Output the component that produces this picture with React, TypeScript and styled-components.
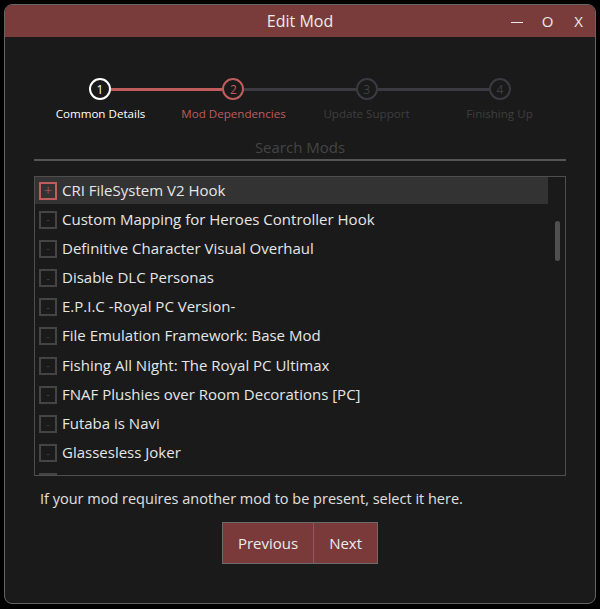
import { type FC } from 'react'
import { styled, createGlobalStyle } from 'styled-components'

const GlobalStyle = createGlobalStyle`
  html, body {
    margin: 0;
    padding: 0;
    background: #000;
  }
  body {
    font-family: "Open Sans", "Noto Sans", sans-serif;
  }
`

const mods = [
  'CRI FileSystem V2 Hook',
  'Custom Mapping for Heroes Controller Hook',
  'Definitive Character Visual Overhaul',
  'Disable DLC Personas',
  'E.P.I.C -Royal PC Version-',
  'File Emulation Framework: Base Mod',
  'Fishing All Night: The Royal PC Ultimax',
  'FNAF Plushies over Room Decorations [PC]',
  'Futaba is Navi',
  'Glassesless Joker',
  'Goho-M Glasses'
]

const steps = ['Common Details', 'Mod Dependencies', 'Update Support', 'Finishing Up']

type StepState = 'done' | 'active' | 'todo'

const stateOf = (i: number): StepState => (i === 0 ? 'done' : i === 1 ? 'active' : 'todo')

const App: FC = () => {
  return (
    <>
      <GlobalStyle />
      <Window>
        <TitleBar>
          <span />
          <Title>Edit Mod</Title>
          <Controls>
            <ControlButton><MinimizeBar /></ControlButton>
            <ControlButton>O</ControlButton>
            <ControlButton>X</ControlButton>
          </Controls>
        </TitleBar>
        <Body>
          <Track>
            <HalfSpacer />
            {steps.map((s, i) => (
              <StepGroup key={s} $last={i === steps.length - 1}>
                <Circle $state={stateOf(i)}>{i + 1}</Circle>
                {i < steps.length - 1 && <Line $on={i === 0} />}
              </StepGroup>
            ))}
            <HalfSpacer />
          </Track>
          <Labels>
            {steps.map((s, i) => (
              <Label key={s} $state={stateOf(i)}>{s}</Label>
            ))}
          </Labels>
          <Search placeholder="Search Mods" />
          <ListBox>
            <Items>
              {mods.map((m, i) => (
                <Row key={m} $selected={i === 0}>
                  <Check $on={i === 0}>{i === 0 ? '+' : '-'}</Check>
                  <RowText>{m}</RowText>
                </Row>
              ))}
            </Items>
            <ScrollTrack>
              <Thumb />
            </ScrollTrack>
          </ListBox>
          <Help>If your mod requires another mod to be present, select it here.</Help>
          <Buttons>
            <NavButton>Previous</NavButton>
            <NavButton>Next</NavButton>
          </Buttons>
        </Body>
      </Window>
    </>
  )
}
export default App

const Window = styled.div`
  box-sizing: border-box;
  margin: 4px;
  width: 592px;
  height: 600px;
  border: 1px solid #646464;
  border-radius: 8px;
  overflow: hidden;
  background: #1a1a1a;
  display: flex;
  flex-direction: column;
`

const TitleBar = styled.div`
  height: 32px;
  background: #7a3b3b;
  display: grid;
  grid-template-columns: 1fr auto 1fr;
  align-items: center;
  color: #ececec;
`

const Title = styled.div`
  font-size: 16px;
`

const Controls = styled.div`
  display: flex;
  justify-content: flex-end;
  padding-right: 1px;
`

const ControlButton = styled.div`
  width: 31px;
  height: 32px;
  display: flex;
  align-items: center;
  justify-content: center;
  font-size: 15px;
`

const MinimizeBar = styled.span`
  display: block;
  width: 12px;
  height: 1.5px;
  margin-top: 3px;
  background: #ececec;
`

const Body = styled.div`
  padding: 0 29px;
  display: flex;
  flex-direction: column;
`

const Track = styled.div`
  margin-top: 41px;
  display: flex;
  align-items: center;
  height: 22px;
`

const HalfSpacer = styled.div`
  width: 55px;
  flex: none;
`

const StepGroup = styled.div<{ $last: boolean }>`
  display: flex;
  align-items: center;
  flex: ${p => (p.$last ? 'none' : '1')};
`

const stepColor = (s: StepState): string =>
  s === 'done' ? '#ffffff' : s === 'active' ? '#c05c5c' : '#3a3a40'

const Circle = styled.div<{ $state: StepState }>`
  box-sizing: border-box;
  width: 22px;
  height: 22px;
  flex: none;
  border-radius: 50%;
  border: 2px solid ${p => stepColor(p.$state)};
  color: ${p => (p.$state === 'todo' ? '#3e3e44' : stepColor(p.$state))};
  font-size: 12px;
  display: flex;
  align-items: center;
  justify-content: center;
`

const Line = styled.div<{ $on: boolean }>`
  flex: 1;
  height: 3px;
  background: ${p => (p.$on ? '#c05c5c' : '#3a3a40')};
`

const Labels = styled.div`
  display: grid;
  grid-template-columns: repeat(4, 1fr);
  margin-top: 5px;
`

const Label = styled.div<{ $state: StepState }>`
  text-align: center;
  font-size: 11.6px;
  line-height: 17px;
  color: ${p => (p.$state === 'done' ? '#ffffff' : p.$state === 'active' ? '#c05c5c' : '#3e3e3e')};
`

const Search = styled.input`
  margin-top: 12px;
  background: transparent;
  border: none;
  border-bottom: 2px solid #555;
  height: 25px;
  padding: 0;
  text-align: center;
  font-family: inherit;
  font-size: 15px;
  color: #ddd;
  outline: none;

  &::placeholder {
    color: #454545;
  }
`

const ListBox = styled.div`
  margin-top: 15px;
  height: 300px;
  box-sizing: border-box;
  border: 1px solid #4e4e4e;
  display: grid;
  grid-template-columns: 1fr 17px;
  overflow: hidden;
`

const Items = styled.div`
  display: flex;
  flex-direction: column;
  gap: 2.2px;
  overflow: hidden;
`

const Row = styled.div<{ $selected: boolean }>`
  flex: none;
  height: 27px;
  display: flex;
  align-items: center;
  gap: 5px;
  padding-left: 4px;
  background: ${p => (p.$selected ? '#333333' : 'transparent')};
`

const Check = styled.div<{ $on: boolean }>`
  box-sizing: border-box;
  width: 18px;
  height: 18px;
  border: 2px solid ${p => (p.$on ? '#c05c5c' : '#444')};
  color: ${p => (p.$on ? '#c05c5c' : '#5a5a5a')};
  font-size: ${p => (p.$on ? '15px' : '11px')};
  font-weight: 300;
  line-height: 1;
  display: flex;
  align-items: center;
  justify-content: center;
`

const RowText = styled.span`
  font-size: 15px;
  color: #e6e6e6;
  padding-bottom: 2px;
`

const ScrollTrack = styled.div`
  display: flex;
  justify-content: center;
  padding-left: 2px;
`

const Thumb = styled.div`
  margin-top: 44px;
  width: 5px;
  height: 40px;
  border-radius: 3px;
  background: #505050;
`

const Help = styled.div`
  margin-top: 13px;
  padding-left: 6px;
  font-size: 14.5px;
  color: #e0e0e0;
`

const Buttons = styled.div`
  margin-top: 14px;
  display: flex;
  justify-content: center;
`

const NavButton = styled.button`
  height: 42px;
  padding: 0 15px;
  background: #7a3a3a;
  border: 1px solid #6a6a6a;
  color: #ececec;
  font-family: inherit;
  font-size: 15px;

  & + & {
    margin-left: -1px;
  }
`
